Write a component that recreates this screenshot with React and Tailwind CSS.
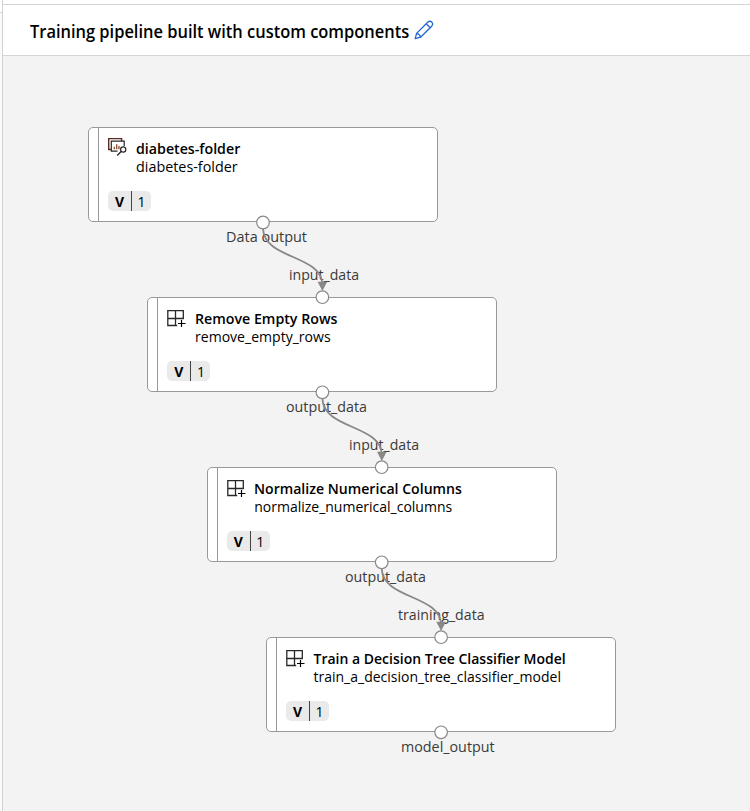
import { useLayoutEffect, useRef } from "react";

// Text squeezed or stretched to a fixed run width.
function FitText({ width, className = "", children }) {
  const ref = useRef(null);
  useLayoutEffect(() => {
    const el = ref.current;
    el.style.transform = `scaleX(${width / el.offsetWidth})`;
  }, [width]);
  return (
    <span ref={ref} className={`inline-block origin-left whitespace-nowrap ${className}`}>
      {children}
    </span>
  );
}

function PencilIcon() {
  return (
    <svg width="20" height="20" viewBox="0 0 20 20" fill="none" stroke="#2266d3" strokeWidth="1.3" strokeLinejoin="round">
      <path d="M1.2 18.6 L2.6 13.4 L13.7 2.2 Q15.9 .4 17.8 2.1 Q19.5 4.1 17.7 6.2 L6.6 17.2 Z M12.2 3.7 L16.2 7.7 M2.6 13.4 Q5.8 14 6.6 17.2" />
    </svg>
  );
}

function DataIcon() {
  return (
    <svg width="20" height="20" viewBox="0 0 20 20" fill="none" stroke="#292827" strokeWidth="1.2">
      <path d="M3.2 11.5 H.7 V.6 H13.6 V3" stroke="#5c2a20" strokeWidth="1.4" />
      <path d="M9.5 13.2 H3.3 V3.2 H16.2 V8" />
      <path d="M6.3 11.2 V8.8 M8.7 11.2 V6.2 M11 11.2 V8" strokeWidth="1.3" stroke="#8a4b28" />
      <circle cx="15.2" cy="11.5" r="2.6" />
      <path d="M13.1 13.6 L9.2 17.4" strokeWidth="1.4" />
    </svg>
  );
}

function ComponentIcon() {
  return (
    <svg className="mt-[2px]" width="20" height="20" viewBox="0 0 20 20" fill="none" stroke="#292827" strokeWidth="1.3">
      <path d="M10.2 15.5 H.8 V.6 H16.3 V8.5 H.8 M8.5 .6 V15.5" />
      <path d="M11 13.5 H18.5 M14.5 10 V17" stroke="#000" strokeWidth="1.2" />
    </svg>
  );
}

const nodes = [
  { place: "left-[88px] top-[127px]", title: "diabetes-folder", tw: 104.5, name: "diabetes-folder", nw: 101.5, icon: DataIcon },
  { place: "left-[147.4px] top-[297px]", title: "Remove Empty Rows", tw: 142, name: "remove_empty_rows", nw: 135.5, icon: ComponentIcon },
  { place: "left-[206.7px] top-[467px]", title: "Normalize Numerical Columns", tw: 207.5, name: "normalize_numerical_columns", nw: 198, icon: ComponentIcon },
  { place: "left-[266px] top-[637px]", title: "Train a Decision Tree Classifier Model", tw: 252, name: "train_a_decision_tree_classifier_model", nw: 247, icon: ComponentIcon },
];

const labels = [
  { place: "left-[226px] top-[227px]", text: "Data output", w: 80.5 },
  { place: "left-[289px] top-[265px]", text: "input_data", w: 70.5 },
  { place: "left-[285.5px] top-[397px]", text: "output_data", w: 80.5 },
  { place: "left-[348.6px] top-[435px]", text: "input_data", w: 70.5 },
  { place: "left-[345px] top-[567px]", text: "output_data", w: 80.5 },
  { place: "left-[398px] top-[605px]", text: "training_data", w: 87 },
  { place: "left-[401px] top-[737px]", text: "model_output", w: 94 },
];

const edges = [
  [263, 222.5],
  [322.4, 392.5],
  [381.7, 562.5],
];

const ports = [
  [263, 222.5],
  [322.4, 297.2],
  [322.4, 392.3],
  [381.7, 467.2],
  [381.7, 562.3],
  [441.1, 637.2],
  [441.1, 732.3],
];

function Node({ node }) {
  const Icon = node.icon;
  return (
    <div className={`absolute ${node.place} flex h-[95px] w-[350px] overflow-hidden rounded-[5px] border border-[#999] bg-white`}>
      <div className="w-[10px] shrink-0 border-r border-[#999]" />
      <div className="flex flex-col pl-[9px] pt-[10px]">
        <div className="flex h-[40px]">
          <div className="w-[27.5px] shrink-0">
            <Icon />
          </div>
          <div className="flex flex-col pt-[2px] text-[14px] leading-[18px] text-black">
            <div className="h-[18px]">
              <FitText width={node.tw} className="font-semibold">{node.title}</FitText>
            </div>
            <div className="h-[18px]">
              <FitText width={node.nw}>{node.name}</FitText>
            </div>
          </div>
        </div>
        <div className="mt-[13px] flex h-[20px] w-[43px] items-center rounded-[5px] bg-[#eaeaea] text-[14px] leading-[20px] text-black">
          <span className="w-[23px] pt-px text-center font-bold">V</span>
          <span className="h-full w-px bg-[#444]" />
          <span className="flex-1 pt-px text-center">1</span>
        </div>
      </div>
    </div>
  );
}

export default function App() {
  return (
    <div className="flex h-[811px] w-[750px] overflow-hidden bg-white font-['Open_Sans','Noto_Sans',sans-serif]">
      <div className="flex w-[3px] shrink-0 flex-col border-r border-[#d2d2d2]">
        <div className="h-[13px] border-b border-[#d2d2d2]" />
        <div className="flex-1 bg-[#fafafa]" />
      </div>
      <div className="flex flex-1 flex-col">
        <div className="h-[5px] border-b border-[#d6d6d6]" />
        <header className="flex h-[51px] items-center border-b border-[#d6d6d6] pl-[26.5px]">
          <div className="w-[384.5px] pt-px text-[17.5px] leading-[24px] text-black">
            <FitText width={379.5} className="font-semibold">Training pipeline built with custom components</FitText>
          </div>
          <PencilIcon />
        </header>
        <main className="flex-1 bg-[#f3f3f3]">
          {nodes.map((n) => (
            <Node key={n.title} node={n} />
          ))}
          {labels.map((l) => (
            <div key={l.place} className={`absolute ${l.place} h-5 text-[14px] leading-5 text-[#3b3a39]`}>
              <FitText width={l.w}>{l.text}</FitText>
            </div>
          ))}
          <svg className="absolute left-0 top-0" width="750" height="811" viewBox="0 0 750 811" fill="none">
            {edges.map(([x, y]) => (
              <g key={x} transform={`translate(${x} ${y})`}>
                <path d="M0 6 C1 37 58.5 32 59.4 62" stroke="#8a8886" strokeWidth="1.8" />
                <path d="M54.6 59.3 H64.2 L59.4 68.5 Z" fill="#8a8886" />
              </g>
            ))}
            {ports.map(([x, y]) => (
              <circle key={`${x}-${y}`} cx={x} cy={y} r="6.3" fill="#fff" stroke="#8a8886" strokeWidth="1.2" />
            ))}
          </svg>
        </main>
      </div>
    </div>
  );
}
